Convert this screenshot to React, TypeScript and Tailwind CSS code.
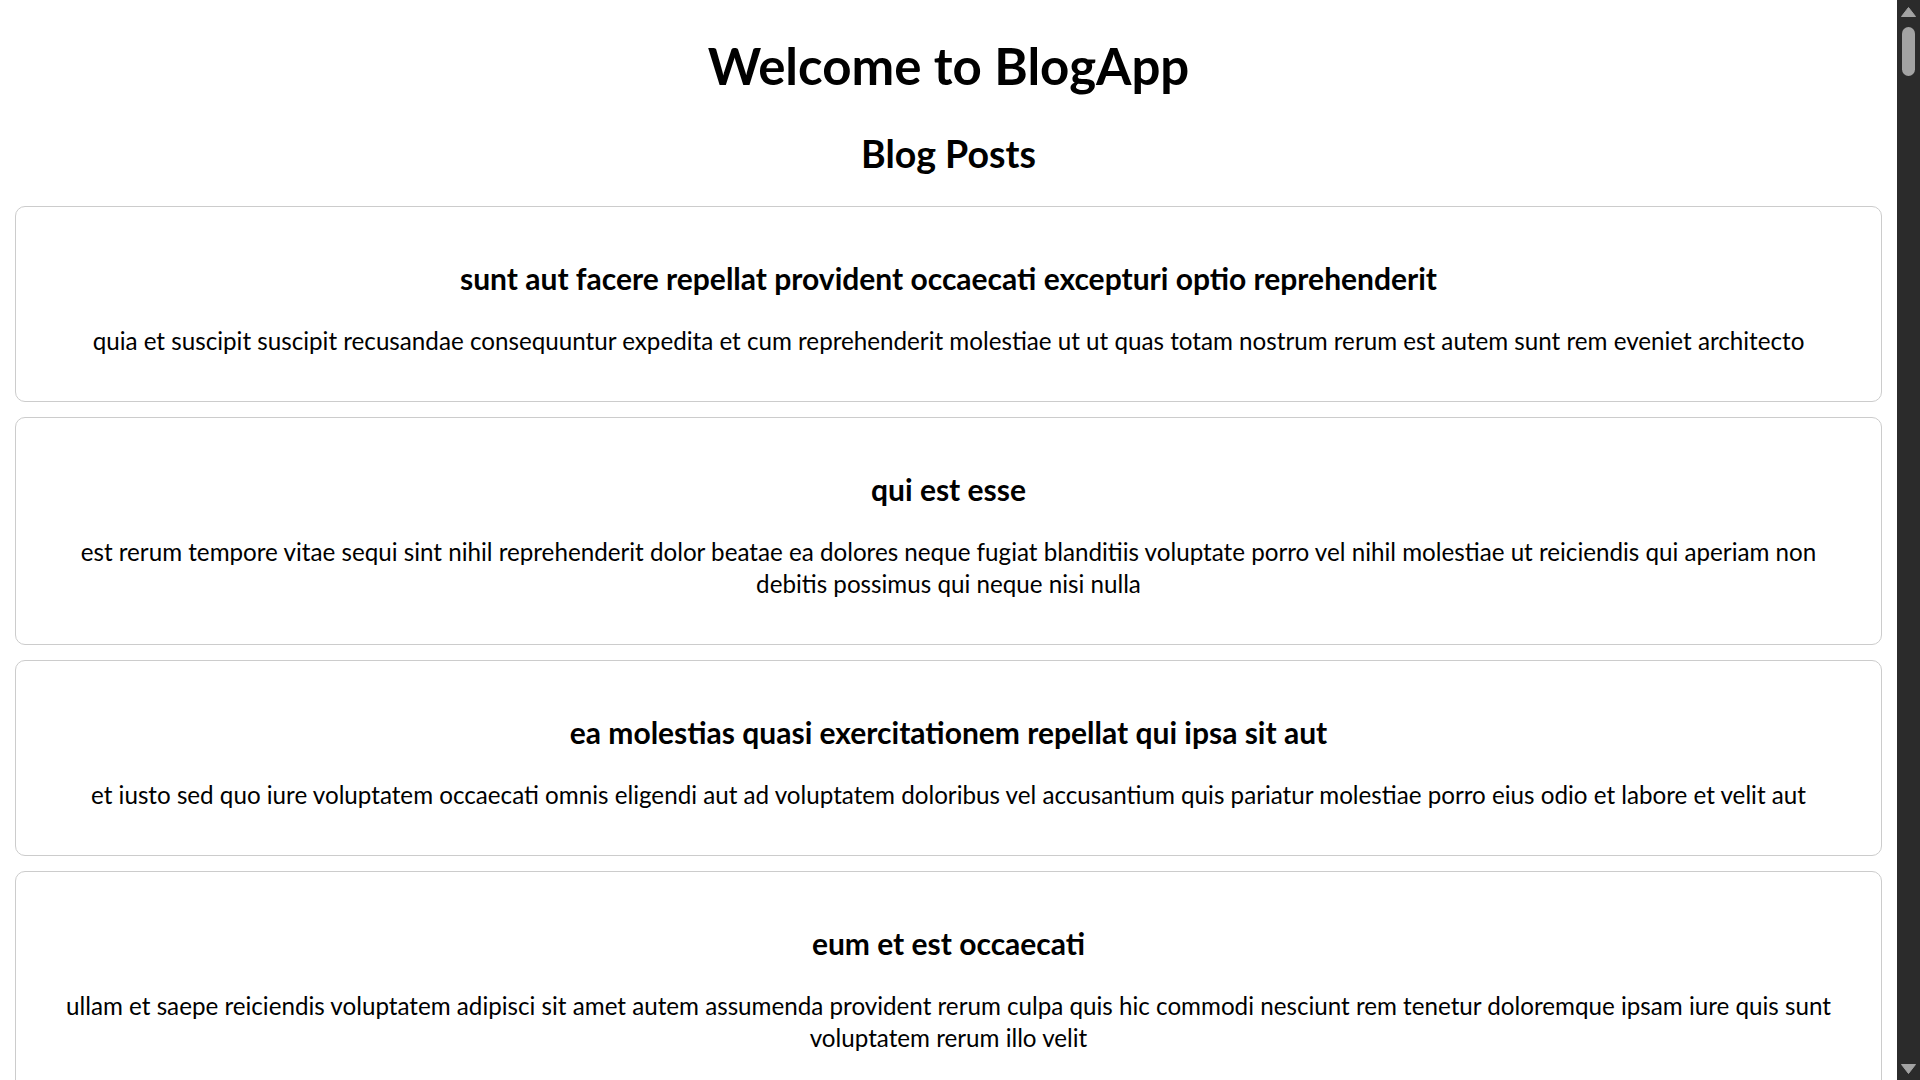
type Post = {
  id: number,
  title: string,
  body: string,
}

const posts: Post[] = [
  {
    id: 1,
    title: 'sunt aut facere repellat provident occaecati excepturi optio reprehenderit',
    body: 'quia et suscipit suscipit recusandae consequuntur expedita et cum reprehenderit molestiae ut ut quas totam nostrum rerum est autem sunt rem eveniet architecto',
  },
  {
    id: 2,
    title: 'qui est esse',
    body: 'est rerum tempore vitae sequi sint nihil reprehenderit dolor beatae ea dolores neque fugiat blanditiis voluptate porro vel nihil molestiae ut reiciendis qui aperiam non debitis possimus qui neque nisi nulla',
  },
  {
    id: 3,
    title: 'ea molestias quasi exercitationem repellat qui ipsa sit aut',
    body: 'et iusto sed quo iure voluptatem occaecati omnis eligendi aut ad voluptatem doloribus vel accusantium quis pariatur molestiae porro eius odio et labore et velit aut',
  },
  {
    id: 4,
    title: 'eum et est occaecati',
    body: 'ullam et saepe reiciendis voluptatem adipisci sit amet autem assumenda provident rerum culpa quis hic commodi nesciunt rem tenetur doloremque ipsam iure quis sunt voluptatem rerum illo velit',
  },
  {
    id: 5,
    title: 'nesciunt quas odio',
    body: 'repudiandae veniam quaerat sunt sed alias aut fugiat sit autem sed est voluptatem omnis possimus esse voluptatibus quis est aut tenetur dolor neque',
  },
];

const PostCard = ({ post }: { post: Post }) => {
  return (
    <div className="border border-[#cccccc] rounded-[10px] px-[30px] pt-[53px] pb-[44px] text-center">
      <h3 className="text-[30px] leading-[37px] font-bold">{post.title}</h3>
      <p className="text-[24.2px] leading-[32px] mt-[28px]">{post.body}</p>
    </div>
  );
};

const FakeScrollbar = () => {
  return (
    <div className="w-[23px] shrink-0 h-full bg-[#2b2b2b] flex flex-col items-center pt-[7px] pb-[6px]">
      <svg width="15" height="10" viewBox="0 0 15 10">
        <polygon points="7.5,0.5 14.5,9.5 0.5,9.5" fill="#a3a3a3" strokeLinejoin="round" stroke="#a3a3a3" />
      </svg>
      <div className="w-[13px] h-[49px] mt-[10px] rounded-full bg-[#a3a3a3]" />
      <div className="flex-1" />
      <svg width="15" height="10" viewBox="0 0 15 10">
        <polygon points="0.5,0.5 14.5,0.5 7.5,9.5" fill="#a3a3a3" strokeLinejoin="round" stroke="#a3a3a3" />
      </svg>
    </div>
  );
};

const App = () => {
  return (
    <div className="flex w-full h-screen overflow-hidden bg-white text-black font-['Lato',sans-serif]">
      <main className="flex-1 min-w-0 overflow-hidden">
        <h1 className="text-[51px] leading-[64px] font-bold text-center mt-[34px]">Welcome to BlogApp</h1>
        <h2 className="text-[37.5px] leading-[48px] font-bold text-center mt-[32px]">Blog Posts</h2>
        <div className="flex flex-col gap-[15px] px-[15px] mt-[28px]">
          {posts.map((post) => (
            <PostCard key={post.id} post={post} />
          ))}
        </div>
      </main>
      <FakeScrollbar />
    </div>
  );
};

export default App;
